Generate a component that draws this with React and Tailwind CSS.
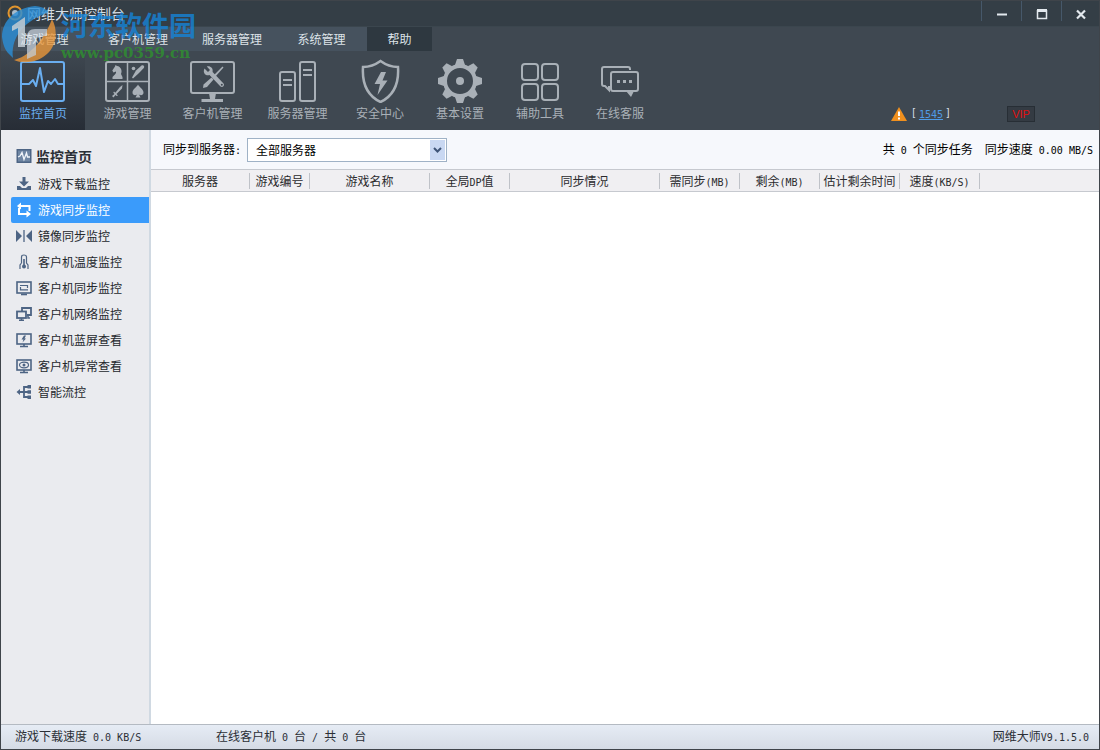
import React, { useState } from "react";

const menus = [
    { name: "游戏管理", className: "w-[87px]" },
    { name: "客户机管理", className: "w-[100px]" },
    { name: "服务器管理", className: "w-[88px]" },
    { name: "系统管理", className: "w-[91px]" },
    { name: "帮助", className: "w-[65px] bg-[#2e3840]" },
];

const columns = [
    { name: "服务器", className: "w-[99px]" },
    { name: "游戏编号", className: "w-[60px]" },
    { name: "游戏名称", className: "w-[120px]" },
    { name: "全局", latin: "DP", after: "值", className: "w-[80px]" },
    { name: "同步情况", className: "w-[150px]" },
    { name: "需同步", latin: "(MB)", className: "w-[80px]" },
    { name: "剩余", latin: "(MB)", className: "w-[80px]" },
    { name: "估计剩余时间", className: "w-[80px]" },
    { name: "速度", latin: "(KB/S)", className: "w-[80px]" },
];

// Half-width characters, half as wide as the Chinese ones
const Latin = ({ children }) => (
    <span className="font-['DejaVu_Sans_Mono',monospace] text-[10px] whitespace-pre">
        {children}
    </span>
);

const ToolIcon = ({ children }) => (
    <svg
        width="48"
        height="44"
        viewBox="0 0 48 44"
        fill="none"
        stroke="currentColor"
        strokeWidth="2"
        aria-hidden="true"
    >
        {children}
    </svg>
);

const Wrench = () => (
    <g stroke="none" fill="currentColor">
        <path d="M15.5 9.5 L19 13 L21 11 L17.8 7.6 C21 6.6 24.4 9 23.6 13 L34.5 24.5 C36 26.5 33.6 29 31.5 27.5 L20.5 16 C17 17.5 13.2 14 15.5 9.5Z" />
        <path d="M33.5 7.5 L34.5 8.5 L26.5 17.5 L25 16 Z M22.5 18.5 L24.5 20.5 L18 28 L14 29 L14.5 25.5 Z" />
        <circle cx="32.8" cy="25.8" r="1" fill="#3f4851" />
    </g>
);

const tools = [
    {
        name: "监控首页",
        icon: (
            <ToolIcon>
                <rect x="2" y="3" width="43" height="39" rx="2" />
                <path
                    d="M2 25 H10 L14 21 L17 27 L21 9 L25 33 L29 22 L32 25 L36 20 L39 25 H45"
                    strokeLinejoin="round"
                />
            </ToolIcon>
        ),
    },
    {
        name: "游戏管理",
        icon: (
            <ToolIcon>
                <rect x="2" y="3" width="43" height="39" rx="2" />
                <path d="M23.5 3 V42 M2 22.5 H45" strokeWidth="1.5" />
                <g fill="currentColor" stroke="none">
                    <path d="M8.5 20 V18 C11 15.5 12.5 14 12 12.5 L9.5 13.5 L8.3 11.5 L11 7.5 L11.5 6 L13 7 C17 7.5 18.5 12 17 15 L18.5 18 V20 Z" />
                    <circle cx="29.5" cy="9.5" r="1.8" />
                    <path d="M29 19.5 L28 18.5 L32 11.5 L37.5 6.5 C39.5 5.5 41 7.5 39.8 9 L35 14 Z" />
                    <path d="M18.5 26 L18 29.5 L12.5 35 L14 36.5 L12.5 37 L11.5 36 L9.5 38.5 L8 37 L10.5 35 L9.3 33.8 L10 32.5 L11.3 33.8 L16 28 Z" />
                    <path d="M34 25.5 C35 28 39.5 30 39.5 33.5 C39.5 36.5 36 37 34.7 35 L36.5 38.5 H31.5 L33.3 35 C32 37 28.5 36.5 28.5 33.5 C28.5 30 33 28 34 25.5Z" />
                </g>
            </ToolIcon>
        ),
    },
    {
        name: "客户机管理",
        icon: (
            <ToolIcon>
                <rect x="2" y="3" width="43" height="31" rx="2" />
                <Wrench />
                <path
                    d="M20 34 H27 L26 40 H34 V43 H12.5 V40 H21 Z"
                    fill="currentColor"
                    stroke="none"
                />
            </ToolIcon>
        ),
    },
    {
        name: "服务器管理",
        icon: (
            <ToolIcon>
                <rect x="6" y="13" width="15" height="29" rx="2" />
                <rect x="26" y="3" width="15" height="39" rx="2" />
                <path d="M9 21 H18 M9 26 H18 M29 11 H38 M29 16 H38" />
            </ToolIcon>
        ),
    },
    {
        name: "安全中心",
        icon: (
            <ToolIcon>
                <path
                    d="M24.5 2 C19 6 13 8 7 8 C6 23 10 36 24.5 43 C39 36 43 23 42 8 C36 8 30 6 24.5 2Z"
                    strokeWidth="2.5"
                />
                <path
                    d="M25 13 L18.5 25 H24 L21.5 36 L31.5 21.5 H26.5 L30 13 Z"
                    fill="currentColor"
                    stroke="none"
                />
            </ToolIcon>
        ),
    },
    {
        name: "基本设置",
        icon: (
            <ToolIcon>
                <g transform="translate(24 22)">
                    <circle r="15" strokeWidth="4" />
                    <g fill="currentColor" stroke="none">
                        {[0, 45, 90, 135, 180, 225, 270, 315].map((deg) => (
                            <path
                                key={deg}
                                d="M-5 -16 L-3 -22 H3 L5 -16 Z"
                                transform={`rotate(${deg})`}
                            />
                        ))}
                        <circle r="4" />
                    </g>
                </g>
            </ToolIcon>
        ),
    },
    {
        name: "辅助工具",
        icon: (
            <ToolIcon>
                <rect x="6" y="5" width="16" height="16" rx="3" />
                <rect x="26" y="5" width="16" height="16" rx="3" />
                <rect x="6" y="25" width="16" height="16" rx="3" />
                <rect x="26" y="25" width="16" height="16" rx="3" />
            </ToolIcon>
        ),
    },
    {
        name: "在线客服",
        icon: (
            <ToolIcon>
                <path d="M34 11 V10 Q34 8 32 8 H8 Q6 8 6 10 V25 Q6 27 8 27 H9 L13 31 V27" />
                <path d="M17 13 H40 Q42 13 42 15 V30 Q42 32 40 32 H17 Q15 32 15 30 V15 Q15 13 17 13Z" />
                <path
                    d="M30 32 H38 L35 38 Z M21 21 h3 v3 h-3z M27 21 h3 v3 h-3z M33 21 h3 v3 h-3z"
                    fill="currentColor"
                    stroke="none"
                />
            </ToolIcon>
        ),
    },
];

const SideIcon = ({ children }) => (
    <svg
        width="16"
        height="16"
        viewBox="0 0 16 16"
        fill="none"
        stroke="currentColor"
        strokeWidth="1.6"
        className="shrink-0"
        aria-hidden="true"
    >
        {children}
    </svg>
);

const pages = [
    {
        name: "游戏下载监控",
        icon: (
            <g fill="currentColor" stroke="none">
                <path d="M6.5 1 H9.5 V5.5 H13 L8 10.5 L3 5.5 H6.5 Z" />
                <path d="M1 10 H4 L6 12 H10 L12 10 H15 V14 H1 Z" />
            </g>
        ),
    },
    {
        name: "游戏同步监控",
        icon: (
            <>
                <path d="M3 4 H13.5 V9 M3 6 V12 H13" strokeWidth="2" />
                <path
                    d="M5 0.5 V7.5 L1 4 Z M10.5 8.5 V15.5 L15 12 Z"
                    fill="currentColor"
                    stroke="none"
                />
            </>
        ),
    },
    {
        name: "镜像同步监控",
        icon: (
            <>
                <path
                    d="M0 2 L6 8 L0 14 Z M16 2 L10 8 L16 14 Z"
                    fill="currentColor"
                    stroke="none"
                />
                <path d="M8 2 V14" strokeWidth="1.3" />
            </>
        ),
    },
    {
        name: "客户机温度监控",
        icon: (
            <>
                <path
                    d="M5.5 9 V3 Q5.5 1 8 1 Q10.5 1 10.5 3 V9 L12 11 V15 M5.5 9 L4 11 V15"
                    strokeWidth="1.2"
                />
                <path d="M8 5 V12" />
                <circle cx="8" cy="12.5" r="2" fill="currentColor" stroke="none" />
            </>
        ),
    },
    {
        name: "客户机同步监控",
        icon: (
            <>
                <rect x="1" y="2" width="14" height="11" />
                <path d="M5 14.5 H11" />
                <path d="M4 5.5 H11.5 V8 M4.5 7 V9.8 H12" strokeWidth="1.2" />
            </>
        ),
    },
    {
        name: "客户机网络监控",
        icon: (
            <>
                <path d="M6 5 V2 H15 V9 H11" strokeWidth="1.8" />
                <rect x="1" y="5.5" width="9" height="6.5" strokeWidth="1.8" />
                <path d="M5.5 12 V14 M3 14.2 H8 M12 9 V12 H14" />
            </>
        ),
    },
    {
        name: "客户机蓝屏查看",
        icon: (
            <>
                <rect x="1" y="2" width="14" height="10" />
                <path d="M4 14.5 H12 M8 12 V14" />
                <path
                    d="M8 3.5 L5.5 7.5 H7.5 L6.5 10.5 L10 6.5 H8.5 L10 3.5 Z"
                    fill="currentColor"
                    stroke="none"
                />
            </>
        ),
    },
    {
        name: "客户机异常查看",
        icon: (
            <>
                <rect x="1" y="2" width="14" height="10" />
                <path d="M4 14.5 H12 M8 12 V14" />
                <ellipse cx="8" cy="7" rx="4.5" ry="2.8" strokeWidth="1.2" />
                <circle cx="8" cy="7" r="1.5" fill="currentColor" stroke="none" />
            </>
        ),
    },
    {
        name: "智能流控",
        icon: (
            <>
                <path d="M3 8 H13 M12 3 H8 V13 H12" strokeWidth="1.8" />
                <path
                    d="M4 5 L0.5 8 L4 11 Z M11.5 1 h3.5 v3.5 h-3.5z M11.5 6.3 h3.5 v3.5 h-3.5z M11.5 11.5 h3.5 v3.5 h-3.5z"
                    fill="currentColor"
                    stroke="none"
                />
            </>
        ),
    },
];

const Watermark = () => (
    <div
        className="absolute top-0 left-0 flex pointer-events-none"
        aria-hidden="true"
    >
        <svg width="60" height="66" viewBox="0 0 60 66" className="opacity-80">
            <path
                d="M34 5 C14 7 1 20 1 36 C2 44 4 49 8 53 L12 57 C10 40 18 22 48 11 C44 7 39 5 34 5Z"
                fill="#2b8fd8"
            />
            <path
                d="M51 18 C57 29 56 44 46 53 C36 62 22 63 13 59 C26 56 42 42 51 18Z"
                fill="#e8963a"
            />
            <path
                d="M11 25 L24 16 V46 H17 V27 L11 30 Z"
                fill="#e6eef5"
                opacity="0.85"
            />
            <path
                d="M26 58 V36 Q26 28 34 28 H46 V35 H38 Q35 35 35 38 V54 Z"
                fill="#e6eef5"
                opacity="0.75"
            />
        </svg>
        <div className="flex flex-col pt-2 opacity-80 whitespace-nowrap">
            <span className="text-[27px] leading-8 font-bold text-[#1683d8]">
                河东软件园
            </span>
            <span className="font-['DejaVu_Serif',serif] text-[15px] leading-6 font-bold text-[#2f9130]">
                www.pc0359.cn
            </span>
        </div>
    </div>
);

const TitleBar = () => (
    <div className="flex h-[26px] justify-between bg-[#343e46] border-b border-[#3b464e]">
        <div className="flex items-center gap-1 pb-0.5 pl-1.5">
            <svg width="16" height="16" viewBox="0 0 16 16" aria-hidden="true">
                <circle
                    cx="8"
                    cy="8"
                    r="6.5"
                    fill="none"
                    stroke="#e0952f"
                    strokeWidth="2"
                />
                <circle cx="8" cy="8" r="3" fill="#a9bccb" />
            </svg>
            <h1 className="text-[14px] leading-5 text-[#d5dde3]">
                网维大师控制台
            </h1>
        </div>
        <div className="flex items-start text-[#e3e9ee]">
            <WindowButton label="最小化" className="w-10">
                <path d="M1 6.5 H11" strokeWidth="2" />
            </WindowButton>
            <WindowButton label="最大化" className="w-10">
                <path d="M1.5 2 V10.5 H10.5 V2" strokeWidth="1.5" />
                <path d="M1 2.5 H11" strokeWidth="3" />
            </WindowButton>
            <WindowButton label="关闭" className="w-[38px]">
                <path d="M2 2.5 L10 10.5 M10 2.5 L2 10.5" strokeWidth="2.2" />
            </WindowButton>
        </div>
    </div>
);

const WindowButton = ({ label, className, children }) => (
    <button
        type="button"
        aria-label={label}
        className={`flex h-5 items-end justify-center border-l border-[#46586a] pb-px ${className}`}
    >
        <svg
            width="12"
            height="12"
            viewBox="0 0 12 12"
            fill="none"
            stroke="currentColor"
            aria-hidden="true"
        >
            {children}
        </svg>
    </button>
);

const Toolbar = () => (
    <div className="flex h-[79px] justify-between">
        <div className="flex">
            {tools.map((tool, i) => (
                <button
                    key={tool.name}
                    type="button"
                    className={`flex flex-col items-center pt-2 ${
                        i === 0
                            ? "w-[84px] bg-linear-to-b from-[#3f4851] to-[#272d36] text-[#6aaef0]"
                            : i < 4
                              ? "w-[85px] text-[#a9b0b7]"
                              : "w-20 text-[#a9b0b7]"
                    }`}
                >
                    {tool.icon}
                    <span className="leading-5">{tool.name}</span>
                </button>
            ))}
        </div>
        <div className="flex items-end gap-14 pr-16 pb-2">
            <div className="flex h-4 items-center gap-1 text-[#d5dde3]">
                <svg width="16" height="14" viewBox="0 0 16 14" aria-hidden="true">
                    <path d="M8 0 L16 14 H0 Z" fill="#f0901e" />
                    <path d="M8 4.5 V9 M8 10.5 V12.5" stroke="#fff" strokeWidth="2" />
                </svg>
                <span className="flex gap-0.5">
                    <Latin>[</Latin>
                    <a href="#messages" className="text-[#4f9be6] underline">
                        <Latin>1545</Latin>
                    </a>
                    <Latin>]</Latin>
                </span>
            </div>
            <button
                type="button"
                className="h-4 w-7 border border-[#272e35] bg-[#343b43] font-['Liberation_Sans',sans-serif] text-[11px] leading-3 text-[#e01010]"
            >
                VIP
            </button>
        </div>
    </div>
);

const Sidebar = ({ current, onSelect }) => (
    <nav className="w-[150px] shrink-0 border-r-2 border-[#d0d9e2] bg-[#eaebef] pt-3 pl-2.5">
        <h2 className="mb-0.5 flex h-[27px] items-center gap-1 pl-[5px] text-[14px] font-bold text-[#2b2f36]">
            <svg width="16" height="16" viewBox="0 0 16 16" aria-hidden="true">
                <rect x="0.5" y="1" width="15" height="14" fill="#4d6484" />
                <rect x="2" y="2.5" width="12" height="11" fill="#6f86a3" />
                <path
                    d="M2 9 L4 8 L6 4.5 L8 11.5 L10.5 5 L11.5 9 H14"
                    fill="none"
                    stroke="#f1f5fa"
                    strokeWidth="1.3"
                />
            </svg>
            监控首页
        </h2>
        {pages.map((page) => (
            <button
                key={page.name}
                type="button"
                onClick={() => onSelect(page.name)}
                className={`flex h-[26px] w-full items-center gap-1.5 rounded-l-xs pl-[5px] ${
                    page.name === current
                        ? "bg-[#3a9bfb] text-white"
                        : "text-[#4d6484]"
                }`}
            >
                <SideIcon>{page.icon}</SideIcon>
                <span
                    className={
                        page.name === current ? "text-white" : "text-[#25282d]"
                    }
                >
                    {page.name}
                </span>
            </button>
        ))}
    </nav>
);

const SyncPanel = () => (
    <main className="min-w-0 flex-1 bg-white">
        <div className="flex h-[39px] items-center justify-between bg-[#f6f8fc] pr-1.5 pl-3 text-black">
            <div className="flex items-center">
                <label htmlFor="server" className="w-[84px]">
                    同步到服务器<Latin>:</Latin>
                </label>
                <div className="relative">
                    <select
                        id="server"
                        className="block h-6 w-[200px] appearance-none border border-[#9fb2c6] bg-white pl-2"
                    >
                        <option>全部服务器</option>
                    </select>
                    <span className="pointer-events-none absolute inset-y-0.5 right-0.5 flex w-[15px] items-center justify-center bg-[#c9d8f2]">
                        <svg width="9" height="6" viewBox="0 0 9 6" aria-hidden="true">
                            <path
                                d="M1 1 L4.5 4.5 L8 1"
                                fill="none"
                                stroke="#3f5577"
                                strokeWidth="2"
                            />
                        </svg>
                    </span>
                </div>
            </div>
            <div className="flex gap-3">
                <span>
                    共<Latin> 0 </Latin>个同步任务
                </span>
                <span>
                    同步速度<Latin> 0.00 MB/S</Latin>
                </span>
            </div>
        </div>
        <table className="w-full table-fixed border-y border-[#c6c9cf] bg-[#f0eff2] text-[#2b2b2e]">
            <thead>
                <tr className="h-[22px]">
                    {columns.map((column) => (
                        <th
                            key={column.name}
                            className={`p-0 font-normal ${column.className}`}
                        >
                            <div className="h-4 border-r border-[#bfc2c8] leading-4 whitespace-nowrap">
                                {column.name}
                                <Latin>{column.latin}</Latin>
                                {column.after}
                            </div>
                        </th>
                    ))}
                    <td />
                </tr>
            </thead>
        </table>
    </main>
);

const App = () => {
    const [current, setCurrent] = useState("游戏同步监控");

    return (
        <div className="relative flex min-h-screen flex-col border border-[#3f444a] bg-[#3f4851] font-['Noto_Sans_CJK_SC',sans-serif] text-[12px] leading-4">
            <header>
                <TitleBar />
                <div className="flex h-6">
                    {menus.map((menu) => (
                        <button
                            key={menu.name}
                            type="button"
                            className={`text-[#dde3e8] ${menu.className} ${
                                menu.name === "帮助" ? "" : "bg-[#46525e]"
                            }`}
                        >
                            {menu.name}
                        </button>
                    ))}
                </div>
                <Toolbar />
            </header>
            <div className="flex flex-1">
                <Sidebar current={current} onSelect={setCurrent} />
                <SyncPanel />
            </div>
            <footer className="flex h-[25px] items-center border-t border-[#b4bac2] bg-linear-to-b from-[#e6ecf5] to-[#d5dbe5] pr-2.5 pl-3.5 text-[#2b2f36]">
                <span className="w-[201px]">
                    游戏下载速度<Latin> 0.0 KB/S</Latin>
                </span>
                <span className="flex-1">
                    在线客户机<Latin> 0 </Latin>台<Latin> / </Latin>共
                    <Latin> 0 </Latin>台
                </span>
                <span>
                    网维大师<Latin>V9.1.5.0</Latin>
                </span>
            </footer>
            <Watermark />
        </div>
    );
};

export default App;
